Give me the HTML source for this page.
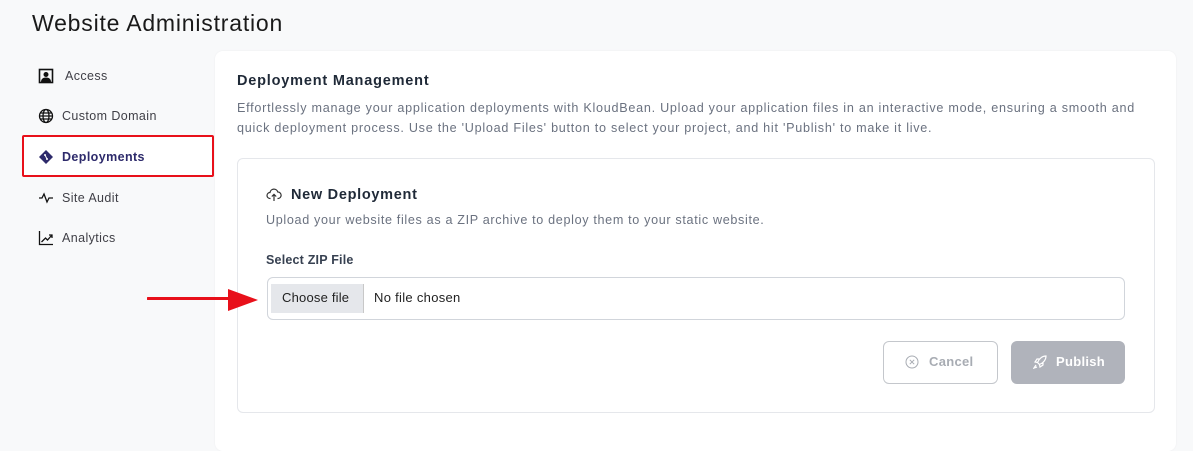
<!DOCTYPE html>
<html><head><style>
*{box-sizing:border-box;margin:0;padding:0}
body{width:1193px;height:432px;overflow:hidden;background:#f8f9fa;font-family:"Liberation Sans",sans-serif;color:#1f2937;position:relative}
.t{position:absolute;white-space:nowrap}
h1{position:absolute;left:32px;top:10px;font-size:23px;font-weight:400;color:#1a1a1a;letter-spacing:0.8px}
.nav{position:absolute;left:38px;font-size:12.5px;color:#3f3f46;letter-spacing:0.4px}
.nav svg{position:absolute;left:0;top:-1px}
.nav span{position:absolute;left:24px;top:0;white-space:nowrap}
.card{position:absolute;left:215px;top:51px;width:961px;height:400px;background:#fff;border-radius:8px;box-shadow:0 0 2px rgba(0,0,0,.05)}
.inner{position:absolute;left:237px;top:158px;width:918px;height:255px;border:1px solid #e5e7eb;border-radius:6px;background:#fff}
</style></head><body>
<h1>Website Administration</h1>
<div class="nav" style="top:69px"><svg width="16" height="16" viewBox="0 0 16 16"><rect x="1.5" y="1.5" width="13" height="13" fill="none" stroke="#111" stroke-width="1.6"/><circle cx="8" cy="6.5" r="2.5" fill="#111"/><path d="M3 14c0-3 2-4.5 5-4.5s5 1.5 5 4.5z" fill="#111"/></svg><span style="left:27px">Access</span></div>
<div class="nav" style="top:109px"><svg width="16" height="16" viewBox="0 0 16 16" fill="none" stroke="#111" stroke-width="1.3"><circle cx="8" cy="8" r="6.5"/><ellipse cx="8" cy="8" rx="3" ry="6.5"/><path d="M1.5 8h13M2.5 5h11M2.5 11h11"/></svg><span>Custom Domain</span></div>
<div style="position:absolute;left:22px;top:135px;width:192px;height:42px;border:2px solid #e8101a;border-radius:2px;background:#fff"></div>
<div class="nav" style="top:150px;color:#2d2a6b;font-weight:bold"><svg width="16" height="16" viewBox="0 0 16 16"><path d="M8 1l7 7-7 7-7-7z" fill="#2d2a6b"/><circle cx="7" cy="6" r="1" fill="#fff"/><circle cx="9" cy="10" r="1" fill="#fff"/><path d="M7 6l2 4" stroke="#fff"/></svg><span>Deployments</span></div>
<div class="nav" style="top:191px"><svg width="16" height="16" viewBox="0 0 16 16" fill="none" stroke="#111" stroke-width="1.3"><path d="M1 8h3l2-4 3 8 2-4h4"/></svg><span>Site Audit</span></div>
<div class="nav" style="top:231px"><svg width="16" height="16" viewBox="0 0 16 16" fill="none" stroke="#111" stroke-width="1.3"><path d="M1.5 1v13.5H15"/><path d="M3.5 12l4-4 2 2 4.5-5M11 5h3v3"/></svg><span>Analytics</span></div>
<div class="card"></div>
<div class="t" style="left:237px;top:73px;font-size:14.5px;font-weight:bold;color:#1f2937;letter-spacing:0.8px">Deployment Management</div>
<div class="t" style="left:237px;top:98px;font-size:12.6px;line-height:20px;color:#6b7280;letter-spacing:0.74px">Effortlessly manage your application deployments with KloudBean. Upload your application files in an interactive mode, ensuring a smooth and<br>quick deployment process. Use the 'Upload Files' button to select your project, and hit 'Publish' to make it live.</div>
<div class="inner"></div>
<svg class="t" style="left:266px;top:188px" width="16" height="14" viewBox="0 0 16 14" fill="none" stroke="#333" stroke-width="1.2"><path d="M4.5 10.5H4a3 3 0 0 1 0-6 4 4 0 0 1 7.8-.5A3 3 0 0 1 12 10.5h-.5M8 13V6.5M5.8 8.5 8 6.3l2.2 2.2"/></svg>
<div class="t" style="left:291px;top:187px;font-size:14.5px;font-weight:bold;color:#1f2937;letter-spacing:0.7px">New Deployment</div>
<div class="t" style="left:266px;top:213px;font-size:12.6px;color:#6b7280;letter-spacing:0.66px">Upload your website files as a ZIP archive to deploy them to your static website.</div>
<div class="t" style="left:266px;top:253px;font-size:12.5px;font-weight:bold;color:#374151;letter-spacing:0.2px">Select ZIP File</div>
<div style="position:absolute;left:267px;top:277px;width:858px;height:43px;border:1px solid #d1d5db;border-radius:6px"></div>
<div style="position:absolute;left:271px;top:284px;width:93px;height:29px;background:#e5e7eb;border-right:1px solid #c8c8c8"></div>
<div class="t" style="left:282px;top:290px;font-size:13px;color:#222;letter-spacing:0.2px">Choose file</div>
<div class="t" style="left:374px;top:290px;font-size:13px;color:#222;letter-spacing:0.3px">No file chosen</div>
<svg class="t" style="left:147px;top:288px" width="112" height="24" viewBox="0 0 112 24"><path d="M1 10.5h82" stroke="#e8101a" stroke-width="3" stroke-linecap="round"/><path d="M81 1l30 11-30 11z" fill="#e8101a"/></svg>
<div style="position:absolute;left:883px;top:341px;width:115px;height:43px;border:1px solid #c4c7cc;border-radius:6px"></div>
<svg class="t" style="left:905px;top:355px" width="14" height="14" viewBox="0 0 14 14" fill="none" stroke="#a8acb3" stroke-width="1"><circle cx="7" cy="7" r="6"/><path d="M4.8 4.8l4.4 4.4M9.2 4.8 4.8 9.2"/></svg>
<div class="t" style="left:929px;top:354px;font-size:13px;font-weight:bold;color:#a8acb3;letter-spacing:0.3px">Cancel</div>
<div style="position:absolute;left:1011px;top:341px;width:114px;height:43px;background:#b0b3bb;border-radius:6px"></div>
<svg class="t" style="left:1033px;top:355px" width="14" height="14" viewBox="0 0 14 14" fill="none" stroke="#fff" stroke-width="1.2"><path d="M13 1C9 1 6 4 4.5 7.5l2 2C10 8 13 5 13 1zM4.5 7.5 2 7l2-3h3M6.5 9.5 7 12l3-2V7M3 10l-2 3 3-1"/></svg>
<div class="t" style="left:1056px;top:354px;font-size:13px;font-weight:bold;color:#fff;letter-spacing:0.3px">Publish</div>
</body></html>
